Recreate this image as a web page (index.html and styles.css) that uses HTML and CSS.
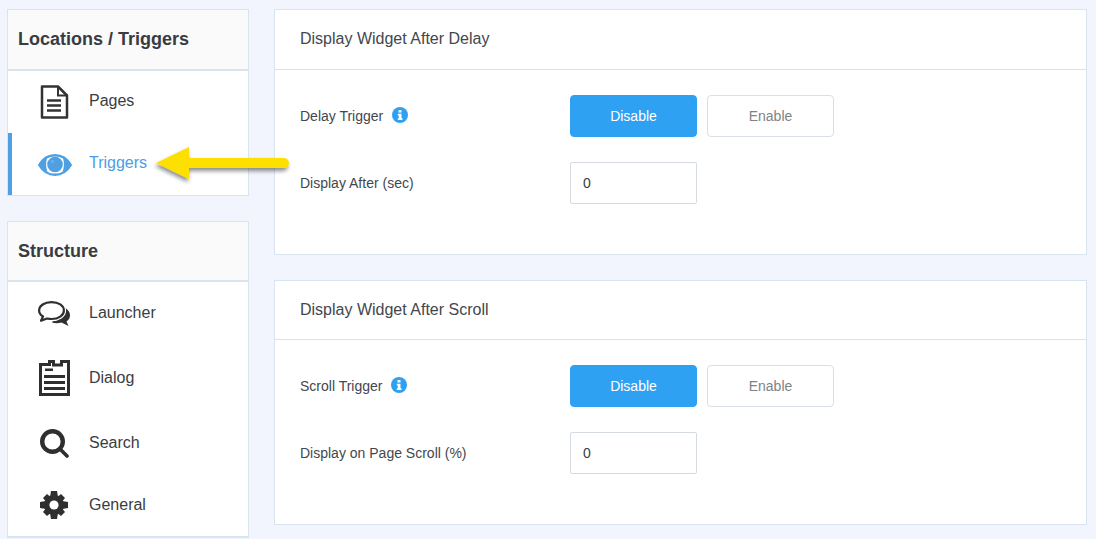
FILE: index.html
```html
<!DOCTYPE html>
<html lang="en">
<head>
<meta charset="utf-8">
<title>Triggers</title>
<link rel="stylesheet" href="styles.css">
</head>
<body>
<div class="layout">
  <aside class="sidebar">
    <section class="side-card">
      <h2 class="side-head">Locations / Triggers</h2>
      <a class="side-item side-item-a">
        <svg class="icon" width="32" height="34" viewBox="0 0 32 34"><path d="M4 1.500H20L29 10.500V32.500H4Z" fill="#fff" stroke="#333" stroke-width="2.500" stroke-linejoin="round"/><path d="M20 1.500V10.500H29" fill="none" stroke="#333" stroke-width="2"/><path d="M9 15.500H23M9 20.500H23M9 25.500H23" stroke="#333" stroke-width="2.400"/></svg>
        <span>Pages</span>
      </a>
      <a class="side-item side-item-b active">
        <svg class="icon" width="34" height="22" viewBox="0 0 34 22"><path d="M1.200 11C5 4.500 10.500 1.200 17 1.200S29 4.500 32.800 11C29 17.500 23.500 20.800 17 20.800S5 17.500 1.200 11Z" fill="none" stroke="#4f9fe3" stroke-width="2.400"/><path d="M1 11C3 8 6 5.500 9 4C7.500 9 8 14 9.500 18C6 16.500 3 14 1 11ZM25 4C28 5.500 31 8 33 11C31 14 28 16.500 24.500 18C26 14 26.500 9 25 4Z" fill="#4f9fe3"/><circle cx="17" cy="10.500" r="7.800" fill="#4f9fe3"/><circle cx="14.500" cy="7.500" r="1.800" fill="#6aaee9"/></svg>
        <span>Triggers</span>
      </a>
    </section>
    <section class="side-card">
      <h2 class="side-head">Structure</h2>
      <a class="side-item side-item-c">
        <svg class="icon" width="32" height="25" viewBox="0 0 32 25"><path d="M23 5C29 7 32 10.500 32 14.500C32 17 30.500 19 28.500 20.500L30.500 25L23.500 21.500C20 22.500 17 22.500 14 21.500Z" fill="#2f2f2f"/><path d="M13.500 1.100C6.500 1.100 1.100 4.600 1.100 9.500C1.100 12 2.600 14 5 15.500L3 19.800L9 17.500C10.500 17.800 12 18 13.500 18C20.500 18 25.900 14.500 25.900 9.500S20.500 1.100 13.500 1.100Z" fill="#fff" stroke="#fff" stroke-width="4.500" stroke-linejoin="round"/><path d="M13.500 1.100C6.500 1.100 1.100 4.600 1.100 9.500C1.100 12 2.600 14 5 15.500L3 19.800L9 17.500C10.500 17.800 12 18 13.500 18C20.500 18 25.900 14.500 25.900 9.500S20.500 1.100 13.500 1.100Z" fill="#fff" stroke="#2f2f2f" stroke-width="2.200" stroke-linejoin="round"/></svg>
        <span>Launcher</span>
      </a>
      <a class="side-item side-item-d">
        <svg class="icon" width="31" height="36" viewBox="0 0 31 36"><path fill-rule="evenodd" d="M0 3H9V0H16V3.500H21V0H31V36H0ZM3 6V33H28V3H24V6.500H13V3H12V6Z" fill="#2f2f2f"/><path d="M6 8.500H14V11H6ZM5 15H26V18H5ZM5 21H26V24H5ZM5 27H26V30H5Z" fill="#2f2f2f"/></svg>
        <span>Dialog</span>
      </a>
      <a class="side-item side-item-e">
        <svg class="icon" width="29" height="29" viewBox="0 0 29 29"><circle cx="12.500" cy="12.500" r="10.300" fill="none" stroke="#2f2f2f" stroke-width="4.400"/><path d="M20 20L27 27" stroke="#2f2f2f" stroke-width="3.600" stroke-linecap="round"/></svg>
        <span>Search</span>
      </a>
      <a class="side-item side-item-f">
        <svg class="icon" width="28" height="28" viewBox="0 0 28 28"><g fill="#2f2f2f"><circle cx="14" cy="14" r="10"/><path d="M11 0H17L18 6H10ZM11 28H17L18 22H10ZM0 11V17L6 18V10ZM28 11V17L22 18V10Z"/><path d="M3 7L7 3L12 7L7 12ZM25 7L21 3L16 7L21 12ZM3 21L7 25L12 21L7 16ZM25 21L21 25L16 21L21 16Z"/></g><circle cx="14" cy="14" r="4.600" fill="#fff"/></svg>
        <span>General</span>
      </a>
    </section>
  </aside>
  <main class="content">
    <section class="panel">
      <h3 class="panel-head">Display Widget After Delay</h3>
      <div class="panel-body">
        <div class="row">
          <div class="label">Delay Trigger
            <svg class="info" width="16" height="16" viewBox="0 0 16 16"><circle cx="8" cy="8" r="8" fill="#2fa1f3"/><path d="M6.500 3H9.500V5.500H6.500ZM5.800 6.700H9.500V11.300H10.500V13H5.800V11.300H6.800V8.400H5.800Z" fill="#fff"/></svg>
          </div>
          <button class="btn btn-on">Disable</button>
          <button class="btn btn-off">Enable</button>
        </div>
        <div class="row">
          <div class="label">Display After (sec)</div>
          <input class="field" type="text" value="0">
        </div>
      </div>
    </section>
    <section class="panel panel-short">
      <h3 class="panel-head">Display Widget After Scroll</h3>
      <div class="panel-body">
        <div class="row">
          <div class="label">Scroll Trigger
            <svg class="info" width="16" height="16" viewBox="0 0 16 16"><circle cx="8" cy="8" r="8" fill="#2fa1f3"/><path d="M6.500 3H9.500V5.500H6.500ZM5.800 6.700H9.500V11.300H10.500V13H5.800V11.300H6.800V8.400H5.800Z" fill="#fff"/></svg>
          </div>
          <button class="btn btn-on">Disable</button>
          <button class="btn btn-off">Enable</button>
        </div>
        <div class="row">
          <div class="label">Display on Page Scroll (%)</div>
          <input class="field" type="text" value="0">
        </div>
      </div>
    </section>
  </main>
</div>
<svg class="arrow" width="140" height="44" viewBox="0 0 140 44">
  <defs><filter id="sh" x="-10%" y="-20%" width="120%" height="150%"><feDropShadow dx="-1" dy="3" stdDeviation="2" flood-color="#000" flood-opacity=".45"/></filter></defs>
  <path d="M5 20L38 4V15H133A5 5 0 0 1 133 25H38V36Z" fill="#fde000" filter="url(#sh)"/>
</svg>
</body>
</html>
```
FILE: styles.css
```css
* { box-sizing: border-box; }
html, body { margin: 0; height: 539px; overflow: hidden; }
body { background: #f2f5fd; font-family: "Liberation Sans", Arial, sans-serif; color: #3a3d42; }
.layout { display: grid; grid-template-columns: 242px 813px; column-gap: 25px; padding: 9px 0 0 7px; }
.sidebar { display: flex; flex-direction: column; gap: 25px; }
.side-card { background: #fff; border: 1px solid #d9e4f1; }
.side-card + .side-card { border-bottom-width: 2px; }
.side-head { margin: 0; height: 61px; padding-left: 10px; background: #fafafa; border-bottom: 2px solid #d9e4f1; font-size: 18px; line-height: 58px; font-weight: 700; color: #383c42; }
.side-card + .side-card .side-head { height: 60px; }
.side-item { display: flex; align-items: center; position: relative; padding-left: 81px; font-size: 16px; color: #3a3d42; }
.side-item .icon { position: absolute; }
.side-item-a { height: 62px; padding-bottom: 2px; }
.side-item-a .icon { left: 30px; top: 14px; }
.side-item-b { height: 62px; padding-bottom: 2px; }
.side-item-b .icon { left: 30px; top: 21px; }
.side-item-c { height: 63px; padding-bottom: 1px; }
.side-item-c .icon { left: 30px; top: 19px; }
.side-item-d { height: 65px; }
.side-item-d .icon { left: 31px; top: 15px; }
.side-item-e { height: 65px; }
.side-item-e .icon { left: 32px; top: 19px; }
.side-item-f { height: 61px; padding-bottom: 1px; }
.side-item-f .icon { left: 32px; top: 16px; }
.side-item.active { color: #4a9ee3; border-left: 4px solid #4f9fe3; padding-left: 77px; }
.side-item.active .icon { left: 26px; }
.content { display: flex; flex-direction: column; gap: 25px; }
.panel { height: 246px; background: #fff; border: 1px solid #d9e4f1; }
.panel-short { height: 245px; }
.panel-head { margin: 0; height: 60px; padding-left: 25px; border-bottom: 1px solid #d9e2ec; font-size: 16px; line-height: 57px; font-weight: 400; color: #43474d; }
.panel-short .panel-head { height: 59px; }
.panel-body { padding: 25px 0 0 25px; display: flex; flex-direction: column; gap: 25px; }
.row { display: flex; align-items: center; height: 42px; gap: 10px; }
.label { width: 270px; margin-right: -10px; font-size: 14px; color: #43474d; display: flex; align-items: center; gap: 9px; flex: none; }
.info { position: relative; top: -1.5px; }
.btn { width: 127px; height: 42px; border-radius: 4px; font: 14px "Liberation Sans", Arial, sans-serif; padding: 0; }
.btn-on { background: #2fa1f3; border: 1px solid #2fa1f3; color: #fff; }
.btn-off { background: #fff; border: 1px solid #d9dfe6; color: #7e8388; }
.field { width: 127px; height: 42px; border: 1px solid #d5dae0; border-radius: 2px; padding: 0 12px; font: 14px "Liberation Sans", Arial, sans-serif; color: #3a3d42; background: #fff; }
.arrow { position: absolute; left: 151px; top: 143px; }
```
